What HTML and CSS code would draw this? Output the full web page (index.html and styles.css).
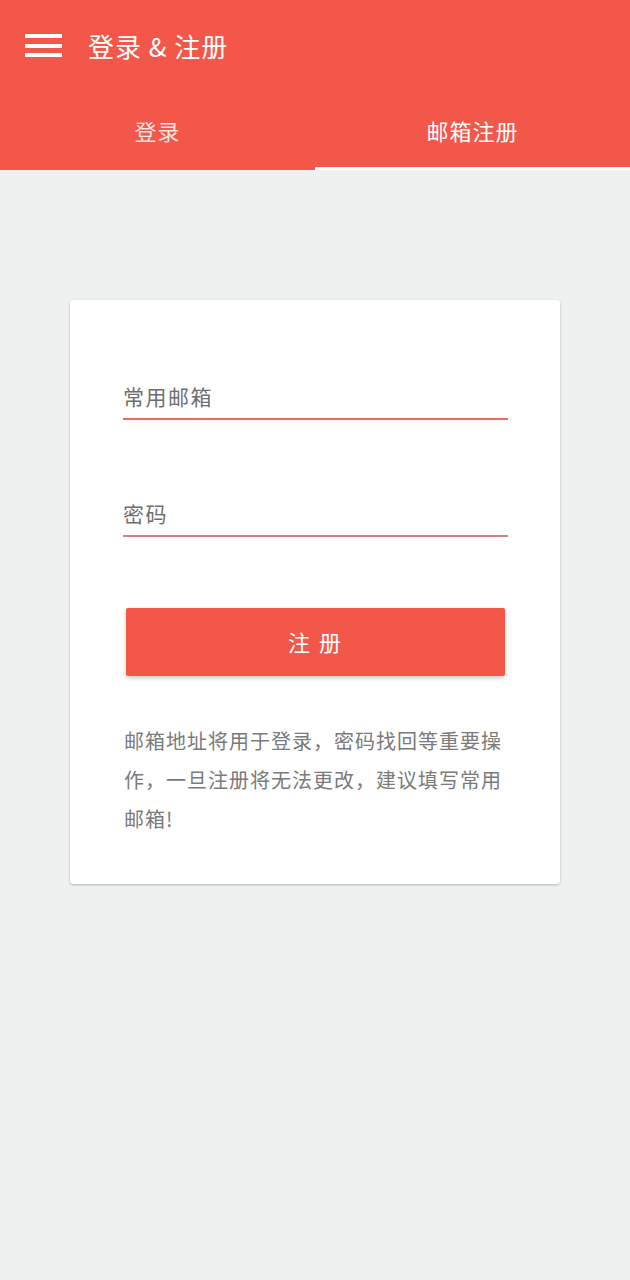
FILE: index.html
```html
<!DOCTYPE html>
<html lang="zh-CN">
<head>
<meta charset="utf-8">
<link rel="stylesheet" href="styles.css">
</head>
<body>
<header class="appbar">
  <div class="toolbar">
    <div class="menu-icon"><span></span><span></span><span></span></div>
    <div class="title">登录 &amp; 注册</div>
  </div>
  <nav class="tabs">
    <div class="tab">登录</div>
    <div class="tab active">邮箱注册</div>
  </nav>
</header>
<main class="content">
  <section class="card">
    <div class="field focused"><span class="label">常用邮箱</span></div>
    <div class="field"><span class="label">密码</span></div>
    <button class="btn">注 册</button>
    <p class="note">邮箱地址将用于登录，密码找回等重要操作，一旦注册将无法更改，建议填写常用邮箱!</p>
  </section>
</main>
</body>
</html>
```

FILE: styles.css
```css
* { box-sizing: border-box; }
html, body { margin: 0; padding: 0; }
body {
  width: 630px;
  min-height: 1280px;
  background: #eff1f0;
  font-family: "Noto Sans CJK SC", "Noto Sans", sans-serif;
}
.appbar {
  background: #f35749;
  height: 170px;
  display: flex;
  flex-direction: column;
}
.toolbar {
  height: 93px;
  display: flex;
  align-items: center;
  padding-left: 25px;
  padding-bottom: 2px;
}
.menu-icon {
  width: 37px;
  display: flex;
  flex-direction: column;
  gap: 5.5px;
}
.menu-icon span {
  display: block;
  height: 4px;
  background: #fff;
}
.title {
  color: #fff;
  font-size: 26px;
  margin-left: 26px;
  line-height: 1;
  letter-spacing: 1px;
}
.tabs {
  flex: 1;
  display: flex;
}
.tab {
  flex: 1;
  display: flex;
  align-items: center;
  justify-content: center;
  color: #fbe4e1;
  font-size: 22px;
  letter-spacing: 1px;
  padding-bottom: 1px;
  border-bottom: 3px solid transparent;
}
.tab.active {
  color: #fff;
  border-bottom-color: #fff;
}
.content {
  padding: 130px 70px 0;
}
.card {
  background: #fff;
  border-radius: 3px;
  box-shadow: 0 1px 3px rgba(0,0,0,0.18), 0 1px 2px rgba(0,0,0,0.08);
  padding: 80px 52px 46px 53px;
  display: flex;
  flex-direction: column;
}
.field {
  height: 40px;
  border-bottom: 2px solid #c9877d;
  display: flex;
  align-items: flex-end;
  padding-bottom: 11px;
  margin-bottom: 77px;
}
.field:nth-child(2) { margin-bottom: 71px; }
.field.focused { border-bottom-color: #f0695c; }
.label {
  color: #6e6e6e;
  font-size: 21px;
  line-height: 1;
  letter-spacing: 1.5px;
}
.btn {
  margin: 0 3px;
  height: 68px;
  border: 0;
  border-radius: 2px;
  background: #f35749;
  color: #fff;
  font-family: inherit;
  font-size: 22px;
  letter-spacing: 2px;
  padding-bottom: 3px;
  box-shadow: 0 2px 4px rgba(0,0,0,0.22);
}
.note {
  margin: 45px 0 0 1px;
  color: #7a7a7a;
  font-size: 20px;
  line-height: 39px;
  letter-spacing: 1px;
}
```
